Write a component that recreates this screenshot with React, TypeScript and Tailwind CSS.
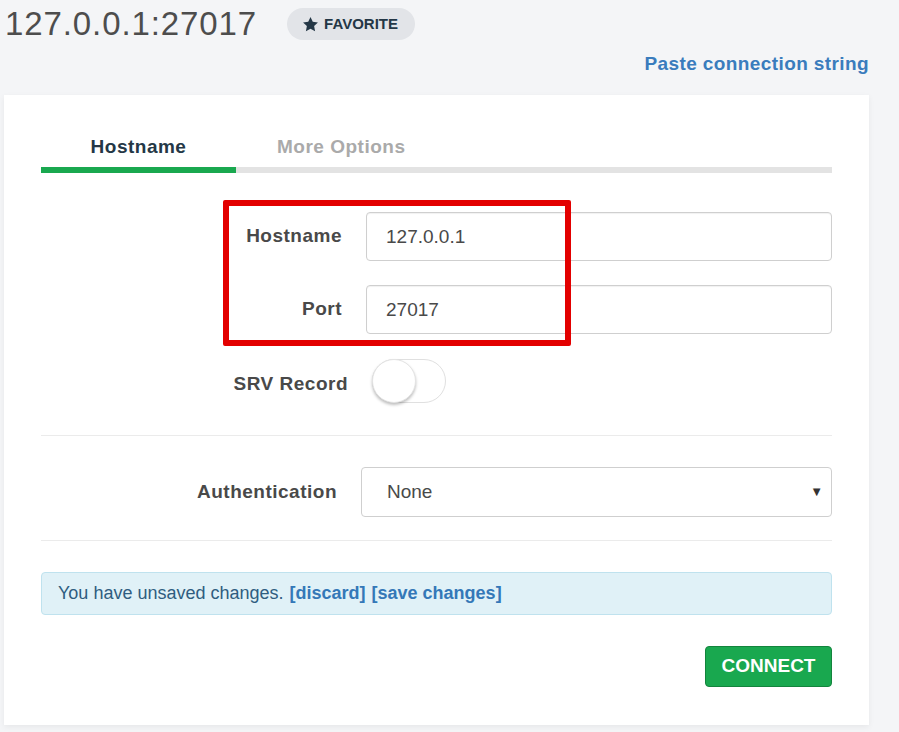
import React, { useState } from 'react';

const StarIcon: React.FC = () => (
  <svg width="17" height="17" viewBox="0 0 24 24" className="fill-[#243746]">
    <path d="M12 1.5l3.2 6.7 7.3.9-5.4 5.1 1.4 7.3L12 17.9l-6.5 3.6 1.4-7.3-5.4-5.1 7.3-.9z" />
  </svg>
);

const ConnectForm: React.FC = () => {
  const [hostname, setHostname] = useState('127.0.0.1');
  const [port, setPort] = useState('27017');
  const [srv, setSrv] = useState(false);

  // shared styles
  const labelCls = 'text-right text-[19px] font-bold tracking-[0.5px] text-[#494949] shrink-0';
  const inputCls =
    'flex-1 h-[49px] rounded-[4px] border border-[#cfcfcf] bg-white pl-[19px] text-[19px] text-[#494949] shadow-[inset_0_1px_1px_rgba(0,0,0,0.06)] outline-none';

  return (
    <div className="min-h-screen bg-[#f4f5f7] pl-[4px] pr-[30px] font-['Liberation_Sans',Arial,sans-serif]">
      {/* Header */}
      <div className="flex h-[48px] items-center">
        <h1 className="ml-[1px] text-[33px] font-normal tracking-[0.9px] text-[#4d4d4d]">127.0.0.1:27017</h1>
        <button className="ml-[30px] flex h-[32px] w-[128px] items-center justify-center gap-[5px] rounded-full bg-[#e2e4e8] pr-[2px] text-[15px] font-bold text-[#243746]">
          <StarIcon />
          FAVORITE
        </button>
      </div>

      <div className="mt-[4px] flex h-[24px] justify-end">
        <a className="text-[19px] font-bold leading-[24px] tracking-[0.4px] text-[#3a7cbd] cursor-pointer">
          Paste connection string
        </a>
      </div>

      {/* Card */}
      <div className="relative mt-[19px] bg-white px-[37px] pt-[40px] pb-[38px] shadow-[0_2px_6px_rgba(0,0,0,0.06)]">
        {/* Tabs */}
        <div className="flex h-[24px] items-center text-[19px] font-bold tracking-[0.5px]">
          <div className="w-[195px] text-center text-[#243746]">Hostname</div>
          <div className="pl-[41px] text-[#aaaaaa]">More Options</div>
        </div>
        <div className="mt-[8px] flex h-[6px]">
          <div className="w-[195px] bg-[#19a84f]" />
          <div className="flex-1 bg-[#e3e3e3]" />
        </div>

        {/* Hostname / Port */}
        <div className="mt-[39px] flex items-center gap-[24px]">
          <label className={`${labelCls} w-[301px]`}>Hostname</label>
          <input className={inputCls} value={hostname} onChange={e => setHostname(e.target.value)} />
        </div>
        <div className="mt-[24px] flex items-center gap-[24px]">
          <label className={`${labelCls} w-[301px]`}>Port</label>
          <input className={inputCls} value={port} onChange={e => setPort(e.target.value)} />
        </div>

        {/* SRV toggle */}
        <div className="mt-[25px] flex items-center gap-[24px]">
          <label className={`${labelCls} w-[307px] pt-[6px]`}>SRV Record</label>
          <button
            onClick={() => setSrv(!srv)}
            className="relative h-[44px] w-[74px] rounded-full border border-[#e0e0e0] bg-white"
          >
            <span className="absolute left-[-1px] top-[-1px] h-[44px] w-[44px] rounded-full border border-[#e4e4e4] bg-white shadow-[0_2px_3px_rgba(0,0,0,0.25)]" />
          </button>
        </div>

        <div className="mt-[32px] h-px bg-[#ebebeb]" />

        {/* Authentication */}
        <div className="mt-[31px] flex items-center gap-[24px]">
          <label className={`${labelCls} w-[296px]`}>Authentication</label>
          <div className="flex h-[50px] flex-1 items-center justify-between rounded-[4px] border border-[#cfcfcf] bg-white pl-[25px] pr-[8px] text-[19px] text-[#494949]">
            <span>None</span>
            <span className="text-[13px] text-[#333]">▼</span>
          </div>
        </div>

        <div className="mt-[23px] h-px bg-[#ebebeb]" />

        {/* Unsaved changes alert */}
        <div className="mt-[31px] flex h-[43px] items-center rounded-[4px] border border-[#bfe2ee] bg-[#e0f1f7] pl-[16px] text-[18px] text-[#2f5d80]">
          You have unsaved changes.
          <a className="ml-[6px] cursor-pointer font-bold text-[#3478b8]">[discard]</a>
          <a className="ml-[6px] cursor-pointer font-bold text-[#3478b8]">[save changes]</a>
        </div>

        <div className="mt-[31px] flex justify-end">
          <button className="h-[41px] w-[127px] rounded-[4px] border border-[#13843d] bg-[#19a84f] text-[19px] font-bold text-white">
            CONNECT
          </button>
        </div>

        {/* red annotation box */}
        <div className="pointer-events-none absolute left-[219px] top-[105px] h-[146px] w-[348px] rounded-[2px] border-[6px] border-[#e30000]" />
      </div>
    </div>
  );
};

export default function App() {
  return <ConnectForm />;
}
